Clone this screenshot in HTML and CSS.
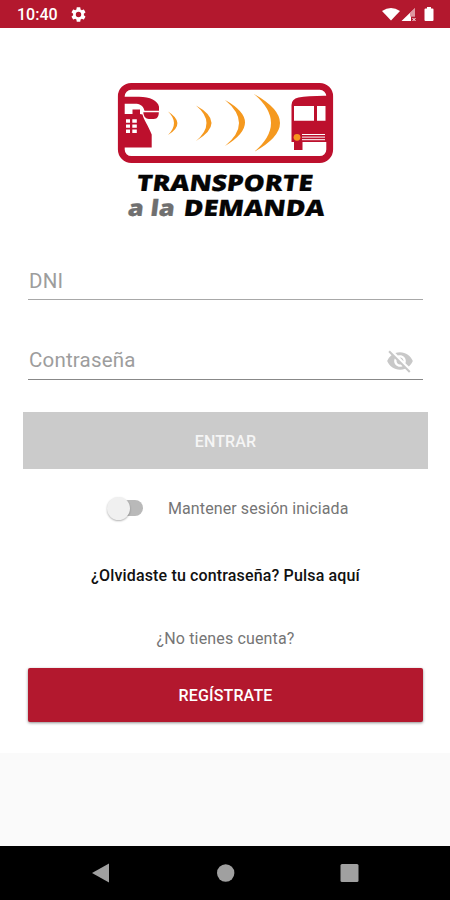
FILE: index.html
```html
<!DOCTYPE html>
<html lang="es">
<head>
<meta charset="utf-8">
<title>Transporte a la Demanda</title>
<link rel="stylesheet" href="styles.css">
</head>
<body>
<header class="status">
  <span class="clock">10:40</span>
  <svg class="gear" viewBox="2 2 20 20"><path d="M19.14 12.94c.04-.3.06-.61.06-.94s-.02-.64-.07-.94l2.03-1.58c.18-.14.23-.41.12-.61l-1.92-3.32c-.12-.22-.37-.29-.59-.22l-2.39.96c-.5-.38-1.03-.7-1.62-.94L14.4 2.81c-.04-.24-.24-.41-.48-.41h-3.84c-.24 0-.43.17-.47.41L9.25 5.35c-.59.24-1.13.57-1.62.94l-2.39-.96c-.22-.08-.47 0-.59.22L2.74 8.87c-.12.21-.08.47.12.61l2.03 1.58c-.05.3-.09.63-.09.94s.02.64.07.94l-2.03 1.58c-.18.14-.23.41-.12.61l1.92 3.32c.12.22.37.29.59.22l2.39-.96c.5.38 1.03.7 1.62.94l.36 2.54c.05.24.24.41.48.41h3.84c.24 0 .44-.17.47-.41l.36-2.54c.59-.24 1.13-.56 1.62-.94l2.39.96c.22.08.47 0 .59-.22l1.92-3.32c.12-.22.07-.47-.12-.61l-2.01-1.58zM12 15.6a3.6 3.6 0 1 1 0-7.2 3.6 3.6 0 0 1 0 7.2z"/></svg>
  <svg class="signals" viewBox="0 0 54 16">
    <path d="M1 4Q10-2 19 4L10 13.500z"/>
    <path d="M34 1v8.500h-4V14H20.500z"/>
    <path d="M29 6l5-5v8.500h-5z" fill="#b3182e" opacity=".45"/>
    <path d="M31.500 11l3 3m0-3l-3 3" stroke="#fff" stroke-width="1"/>
    <path d="M46 0h4v1.500h1.500q1 0 1 1V13q0 1-1 1h-7q-1 0-1-1V2.500q0-1 1-1H46z"/>
  </svg>
</header>
<main class="page">
  <svg class="logo" viewBox="110 75 230 150">
    <rect x="121.300" y="86.300" width="208.400" height="73.200" rx="10" fill="#fff" stroke="#bd102d" stroke-width="6.800"/>
    <g fill="#bd102d">
      <path d="M124 96.800h15c11 0 19 4 20 10v4h-14.500c-1.500-5.500-5-7-9.500-7h-11z"/>
      <path d="M143.300 112.300h15.500c0 4-1.500 6.700-5 6.700h-5c-3 0-5-2-5.500-6.700z"/>
      <path d="M124 114h8.500v-4.500h7.500v4.500l2.500.500c1.500 6 5.200 10 9.200 20v13H124z"/>
      <path d="M291.500 105q0-6 7-7.500 10-2 29-1.800v46.300h-25v8h-8.500v-8h-2.500z"/>
    </g>
    <g fill="#fff">
      <path d="M126 119.300h4v3.400h-4zm6.300 0h4.500v3.400h-4.500zM126 124.400h4v3.400h-4zm6.300 0h4.500v3.400h-4.500zM126 129.500h4v3.400h-4zm6.300 0h4.500v3.400h-4.500z"/>
      <path d="M294 106h20v14.700h-20zM317 106h8.500v14.700H317z"/>
    </g>
    <path d="M302 134.500h23m-23 2.600h23m-23 2.600h23" stroke="#fff" stroke-width="1"/>
    <circle cx="297" cy="137.300" r="3.400" fill="#f7941d"/>
    <g fill="#f5991f">
      <path d="M168 111.500q19 12 0 23.500 12-12 0-23.500z"/>
      <path d="M196 105.500q31 17 0 35.500 21-18 0-35.500z"/>
      <path d="M225 100q40 22 0 46 28-23 0-46z"/>
      <path d="M254 94q52 29 0 58 34-29 0-58z"/>
    </g>
    <g class="wordmark">
      <text transform="translate(136 190.500) skewX(-7)" textLength="176" lengthAdjust="spacingAndGlyphs">TRANSPORTE</text>
      <text class="muted" transform="translate(127 216) skewX(-7)" textLength="47" lengthAdjust="spacingAndGlyphs">a la</text>
      <text transform="translate(183 216) skewX(-7)" textLength="141" lengthAdjust="spacingAndGlyphs">DEMANDA</text>
    </g>
  </svg>
  <div class="field">DNI</div>
  <div class="field password"><span>Contraseña</span>
    <svg class="eye" viewBox="0 0 24 24"><path d="M12 7c2.760 0 5 2.240 5 5 0 .65-.13 1.260-.36 1.830l2.920 2.920c1.510-1.260 2.700-2.890 3.430-4.750-1.730-4.390-6-7.500-11-7.500-1.400 0-2.740.25-3.980.7l2.160 2.160C10.740 7.130 11.350 7 12 7zM2 4.270l2.280 2.280.46.46C3.080 8.300 1.780 10.020 1 12c1.730 4.390 6 7.500 11 7.500 1.550 0 3.030-.3 4.380-.84l.42.42L19.730 22 21 20.730 3.270 3 2 4.270zM7.530 9.800l1.550 1.550c-.05.21-.08.43-.08.65 0 1.660 1.340 3 3 3 .22 0 .44-.03.65-.08l1.550 1.550c-.67.33-1.410.53-2.200.53-2.760 0-5-2.240-5-5 0-.79.2-1.530.53-2.200zm4.310-.78l3.150 3.150.02-.16c0-1.660-1.340-3-3-3l-.17.01z"/></svg>
  </div>
  <button class="enter">ENTRAR</button>
  <label class="keep"><span class="track"><span class="thumb"></span></span><span>Mantener sesión iniciada</span></label>
  <a class="forgot">¿Olvidaste tu contraseña? Pulsa aquí</a>
  <p class="account">¿No tienes cuenta?</p>
  <button class="register">REGÍSTRATE</button>
</main>
<nav class="nav">
  <svg viewBox="0 0 450 54"><path d="M92 27l17-9.500v19z"/><circle cx="225.700" cy="27" r="8.700"/><rect x="340.500" y="18" width="18" height="18" rx="1.500"/></svg>
</nav>
</body>
</html>
```
FILE: styles.css
```css
* { box-sizing: border-box; }
body {
  margin: 0;
  height: 900px;
  display: flex;
  flex-direction: column;
  background: #fafafa;
  font-family: Roboto, sans-serif;
  color: #757575;
}
.status {
  height: 28px;
  flex: none;
  display: flex;
  align-items: center;
  padding: 2px 15px 0 17px;
  background: #b3182e;
  color: #fff;
  fill: #fff;
}
.clock { width: 54px; font-size: 16px; font-weight: 500; line-height: 26px; }
.gear { width: 15px; height: 15px; margin-top: -2px; }
.signals { width: 54px; height: 16px; margin-left: auto; }
.page {
  height: 725px;
  flex: none;
  display: flex;
  flex-direction: column;
  padding: 47px 27px 0 28px;
  background: #fff;
}
.logo { width: 230px; height: 150px; margin-left: 82px; flex: none; }
.wordmark {
  font-family: "Open Sans", sans-serif;
  font-size: 22.500px;
  font-weight: 800;
  fill: #050505;
  stroke: #050505;
  stroke-width: .2px;
}
.muted { fill: #707070; stroke: #707070; }
.field {
  height: 38px;
  margin: 37px 0 0;
  padding: 0 1px;
  border-bottom: 1.500px solid #a8a8a8;
  color: #9d9d9d;
  font-size: 20.5px;
  line-height: 39px;
  letter-spacing: .2px;
}
.password {
  height: 40px;
  margin-top: 40px;
  padding-top: 2px;
  display: flex;
  justify-content: space-between;
  align-items: center;
  border-color: #888;
}
.eye { width: 28px; height: 28px; margin-right: 8px; fill: #c8c8c8; }
button {
  border: 0;
  padding: 0;
  flex: none;
  color: #fff;
  font: 500 16px Roboto, sans-serif;
  letter-spacing: .15px;
}
.enter { height: 57px; margin: 32px -5px 0; padding-top: 1px; background: #cbcbcb; color: #f5f5f5; }
.keep {
  height: 24px;
  margin: 27px 0 0 79px;
  display: flex;
  align-items: center;
  gap: 25px;
  font-size: 16px;
  letter-spacing: .1px;
}
.track {
  width: 33px;
  height: 16px;
  margin-left: 3px;
  display: flex;
  align-items: center;
  border-radius: 8px;
  background: #b9b9b9;
}
.thumb {
  width: 23px;
  height: 23px;
  margin-left: -3px;
  border-radius: 50%;
  background: #f0f0f0;
  box-shadow: 0 1px 2px rgba(0, 0, 0, .3);
}
.forgot {
  margin-top: 46px;
  text-align: center;
  color: #111;
  font-size: 16px;
  font-weight: 500;
  line-height: 20px;
  letter-spacing: .15px;
}
.account { margin: 43px 0 0; text-align: center; font-size: 16px; line-height: 20px; letter-spacing: .15px; }
.register {
  height: 54px;
  margin-top: 19px;
  border-radius: 2px;
  background: #b3182e;
  box-shadow: 0 1px 3px rgba(0, 0, 0, .45);
}
.nav { height: 54px; margin-top: auto; flex: none; background: #000; }
.nav svg { display: block; width: 450px; height: 54px; fill: #a0a0a0; }
```
